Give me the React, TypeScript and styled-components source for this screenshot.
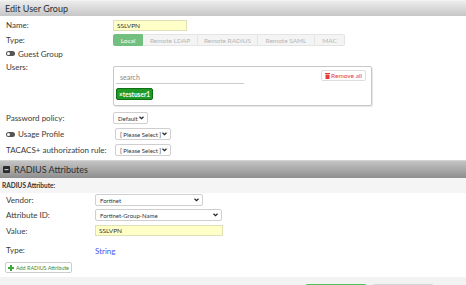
import styled, { createGlobalStyle } from 'styled-components';

const GlobalStyle = createGlobalStyle`
  html, body {
    margin: 0;
    padding: 0;
    background: #ffffff;
    overflow: hidden;
  }
  body {
    font-family: Lato, 'Open Sans', sans-serif;
    color: #333333;
  }
`;

const Page = styled.div`
  width: 466px;
  height: 285px;
  display: flex;
  flex-direction: column;
  background: #ffffff;
`;

const PanelHeader = styled.div<{ $dark?: boolean }>`
  display: flex;
  align-items: center;
  gap: 4px;
  padding-left: ${(p) => (p.$dark ? '3px' : '5px')};
  height: ${(p) => (p.$dark ? '18px' : '16px')};
  margin-top: ${(p) => (p.$dark ? '5px' : '0')};
  background: ${(p) =>
    p.$dark
      ? 'linear-gradient(#c4c4c4, #8e8e8e)'
      : 'linear-gradient(#ececec, #c6c6c6)'};
  border-top: 1px solid ${(p) => (p.$dark ? '#d4d4d4' : '#f2f2f2')};
  font-size: 9px;
  color: #2e2e2e;
  box-sizing: border-box;
`;

const FormBody = styled.div`
  display: flex;
  flex-direction: column;
  padding-top: 3px;
`;

const Row = styled.div<{ $label?: number; $h?: number; $mt?: number }>`
  display: grid;
  grid-template-columns: ${(p) => p.$label ?? 107}px 1fr;
  align-items: center;
  padding-left: 6px;
  height: ${(p) => p.$h ?? 12}px;
  margin-top: ${(p) => p.$mt ?? 0}px;
`;

const TopRow = styled(Row)`
  align-items: start;
  height: auto;
`;

const Label = styled.span`
  font-size: 8px;
  line-height: 10px;
  color: #3a3a3a;
  white-space: nowrap;
`;

const ToggleLabel = styled.span`
  display: flex;
  align-items: center;
  gap: 3px;
  font-size: 8px;
  color: #3a3a3a;
  white-space: nowrap;
`;

const Toggle = styled.span`
  width: 9px;
  height: 5px;
  border-radius: 3px;
  background: #555555;
  position: relative;
  &::after {
    content: '';
    position: absolute;
    left: 1px;
    top: 1px;
    width: 3px;
    height: 3px;
    border-radius: 50%;
    background: #ffffff;
  }
`;

const TextInput = styled.div<{ $w: number }>`
  width: ${(p) => p.$w}px;
  height: 11px;
  box-sizing: border-box;
  background: #ffffc8;
  border: 1px solid #e0e0b8;
  font-size: 6.5px;
  padding-left: 3px;
  display: flex;
  align-items: center;
  color: #333;
`;

const Segmented = styled.div`
  display: flex;
  height: 12px;
`;

const Segment = styled.div<{ $active?: boolean; $w: number }>`
  width: ${(p) => p.$w}px;
  box-sizing: border-box;
  display: flex;
  align-items: center;
  justify-content: center;
  font-size: 6.5px;
  background: ${(p) => (p.$active ? '#72bf80' : '#f4f4f4')};
  color: ${(p) => (p.$active ? '#ffffff' : '#b4b4b4')};
  border: 1px solid ${(p) => (p.$active ? '#72bf80' : '#e4e4e4')};
  border-left-width: ${(p) => (p.$active ? '1px' : '0')};
  border-radius: ${(p) => (p.$active ? '2px 0 0 2px' : '0')};
  &:last-child {
    border-radius: 0 2px 2px 0;
  }
`;

const UsersBox = styled.div`
  margin-top: 4px;
  width: 259px;
  height: 40px;
  box-sizing: border-box;
  border: 1px solid #c8c8c8;
  border-radius: 2px;
  box-shadow: 1px 1px 1px #e6e6e6;
  padding: 3px 5px 0 2px;
  display: flex;
  flex-direction: column;
  gap: 4px;
`;

const SearchLine = styled.div`
  display: flex;
  justify-content: space-between;
  align-items: flex-start;
`;

const Search = styled.div`
  width: 128px;
  height: 14px;
  box-sizing: border-box;
  border-bottom: 1px solid #cccccc;
  font-size: 7px;
  color: #888888;
  padding-left: 4px;
  display: flex;
  align-items: center;
`;

const RemoveAll = styled.div`
  height: 11px;
  box-sizing: border-box;
  padding: 0 3px;
  border: 1px solid #dddddd;
  border-radius: 2px;
  background: #ffffff;
  display: flex;
  align-items: center;
  gap: 1px;
  font-size: 6.5px;
  color: #e53b3b;
`;

const Tag = styled.div`
  align-self: flex-start;
  height: 12px;
  box-sizing: border-box;
  padding: 0 2px 0 2px;
  background: #1f9a27;
  border: 1px solid #0f6f16;
  border-radius: 2px;
  color: #ffffff;
  font-size: 6.5px;
  font-weight: 700;
  display: flex;
  align-items: center;
  gap: 1px;
`;

const Select = styled.div<{ $w: number }>`
  width: ${(p) => p.$w}px;
  height: 12px;
  box-sizing: border-box;
  border: 1px solid #cfcfcf;
  border-radius: 2px;
  background: #ffffff;
  font-size: 6px;
  color: #333333;
  padding: 0 3px 0 4px;
  display: flex;
  align-items: center;
  justify-content: space-between;
  white-space: nowrap;
`;

const SubHeader = styled.div`
  height: 15px;
  background: #f5f5f5;
  display: flex;
  align-items: center;
  padding-left: 2px;
  font-size: 6.5px;
  font-weight: 700;
  color: #333333;
`;

const TypeValue = styled.span`
  font-size: 8px;
  color: #4a55ee;
  margin-top: 3px;
`;

const AddButton = styled.div`
  align-self: flex-start;
  margin: 7px 0 0 5px;
  height: 11px;
  box-sizing: border-box;
  padding: 0 2px;
  border: 1px solid #cccccc;
  border-radius: 2px;
  display: flex;
  align-items: center;
  gap: 2px;
  font-size: 5.4px;
  color: #3c8a3c;
`;

const Footer = styled.div`
  margin-top: auto;
  height: 8px;
  background: #f3f3f3;
  display: flex;
  align-items: flex-end;
  padding-left: 306px;
  gap: 7px;
`;

const FooterButton = styled.div<{ $primary?: boolean }>`
  width: 60px;
  height: 1px;
  border-radius: 2px 2px 0 0;
  background: ${(p) => (p.$primary ? '#4fc25d' : '#d6d6d6')};
`;

const Chevron = () => (
  <svg width="5" height="4" viewBox="0 0 10 7">
    <path d="M1 1l4 4 4-4" fill="none" stroke="#222" strokeWidth="2.4" />
  </svg>
);

const MinusBox = () => (
  <svg width="7" height="7" viewBox="0 0 7 7">
    <rect x="0" y="0" width="7" height="7" rx="1" fill="#2a2a2a" />
    <rect x="1.5" y="3" width="4" height="1.2" fill="#bdbdbd" />
  </svg>
);

const Trash = () => (
  <svg width="5" height="6" viewBox="0 0 5 6">
    <rect x="0" y="0" width="5" height="1" fill="#e53b3b" />
    <rect x="0.5" y="1.5" width="4" height="4.5" rx="0.5" fill="#e53b3b" />
  </svg>
);

const Plus = () => (
  <svg width="6" height="6" viewBox="0 0 6 6">
    <rect x="2" y="0" width="2" height="6" fill="#3caa3c" />
    <rect x="0" y="2" width="6" height="2" fill="#3caa3c" />
  </svg>
);

export default function App() {
  return (
    <Page>
      <GlobalStyle />
      <PanelHeader>Edit User Group</PanelHeader>
      <FormBody>
        <Row>
          <Label>Name:</Label>
          <TextInput $w={74}>SSLVPN</TextInput>
        </Row>
        <Row $mt={3}>
          <Label>Type:</Label>
          <Segmented>
            <Segment $active $w={30}>Local</Segment>
            <Segment $w={55}>Remote LDAP</Segment>
            <Segment $w={60}>Remote RADIUS</Segment>
            <Segment $w={57}>Remote SAML</Segment>
            <Segment $w={30}>MAC</Segment>
          </Segmented>
        </Row>
        <Row $mt={2} $h={11}>
          <ToggleLabel>
            <Toggle />
            Guest Group
          </ToggleLabel>
        </Row>
        <TopRow $mt={3}>
          <Label>Users:</Label>
          <UsersBox>
            <SearchLine>
              <Search>search</Search>
              <RemoveAll>
                <Trash />
                Remove all
              </RemoveAll>
            </SearchLine>
            <Tag>×testuser1</Tag>
          </UsersBox>
        </TopRow>
        <Row $mt={6}>
          <Label>Password policy:</Label>
          <Select $w={35}>
            Default <Chevron />
          </Select>
        </Row>
        <Row $mt={4} $h={11}>
          <ToggleLabel>
            <Toggle />
            Usage Profile
          </ToggleLabel>
          <Select $w={56} style={{ marginLeft: 2 }}>
            [ Please Select ] <Chevron />
          </Select>
        </Row>
        <Row $mt={5} $h={11}>
          <Label>TACACS+ authorization rule:</Label>
          <Select $w={56} style={{ marginLeft: 2 }}>
            [ Please Select ] <Chevron />
          </Select>
        </Row>
      </FormBody>
      <PanelHeader $dark>
        <MinusBox />
        RADIUS Attributes
      </PanelHeader>
      <SubHeader>RADIUS Attribute:</SubHeader>
      <FormBody style={{ paddingTop: 1 }}>
        <Row $label={89}>
          <Label>Vendor:</Label>
          <Select $w={108}>
            Fortinet <Chevron />
          </Select>
        </Row>
        <Row $label={89} $mt={3}>
          <Label>Attribute ID:</Label>
          <Select $w={127}>
            Fortinet-Group-Name <Chevron />
          </Select>
        </Row>
        <Row $label={89} $mt={4} $h={11}>
          <Label>Value:</Label>
          <TextInput $w={128}>SSLVPN</TextInput>
        </Row>
        <Row $label={89} $mt={7}>
          <Label>Type:</Label>
          <TypeValue>String</TypeValue>
        </Row>
        <AddButton>
          <Plus />
          Add RADIUS Attribute
        </AddButton>
      </FormBody>
      <Footer>
        <FooterButton $primary />
        <FooterButton />
      </Footer>
    </Page>
  );
}
